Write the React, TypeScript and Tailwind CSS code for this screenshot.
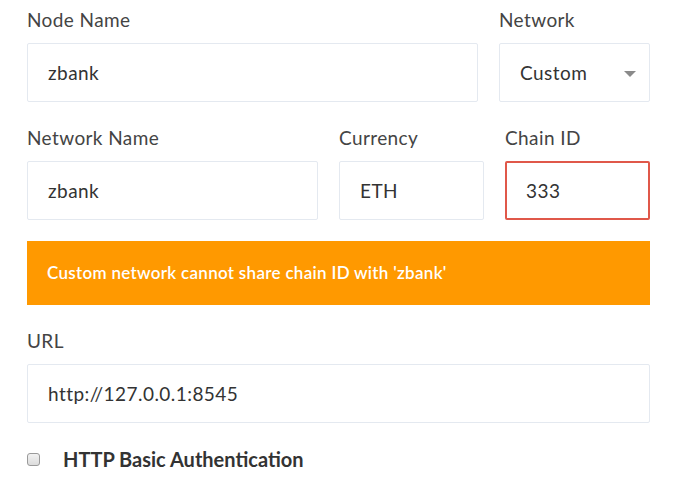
import React from 'react';

const Label = ({ children }: { children: React.ReactNode }) => (
  <label className="block text-[19px] leading-[26px] tracking-[0.4px] text-[#444] mb-[10px]">{children}</label>
);

const Field = ({ value, error }: { value: string; error?: boolean }) => (
  <div
    className={`h-[59px] flex items-center pt-[2px] text-[19px] tracking-[0.45px] text-[#333] bg-white rounded-[2px] ${
      error ? 'border-2 border-[#e0584a] pl-[19px]' : 'border border-[#e4e9f0] pl-[20px]'
    }`}
  >
    {value}
  </div>
);

export default function App() {
  return (
    <div className="min-h-[500px] bg-white pt-[7px] pl-[27px] w-[650px]" style={{ fontFamily: 'Lato, "Open Sans", sans-serif' }}>
      {/* Node name + network */}
      <div className="flex gap-[21px]">
        <div className="flex-1">
          <Label>Node Name</Label>
          <Field value="zbank" />
        </div>
        <div className="w-[151px]">
          <Label>Network</Label>
          <div className="h-[59px] flex items-center justify-between pl-[20px] pr-[13px] pt-[2px] text-[19px] tracking-[0.45px] text-[#333] border border-[#e4e9f0] rounded-[2px]">
            <span>Custom</span>
            <span className="w-0 h-0 border-l-[6px] border-r-[6px] border-t-[6px] border-l-transparent border-r-transparent border-t-[#8a8a8a]" />
          </div>
        </div>
      </div>

      {/* Network / currency / chain */}
      <div className="flex gap-[21px] mt-[23px]">
        <div className="w-[291px]">
          <Label>Network Name</Label>
          <Field value="zbank" />
        </div>
        <div className="w-[145px]">
          <Label>Currency</Label>
          <Field value="ETH" />
        </div>
        <div className="w-[145px]">
          <Label>Chain ID</Label>
          <Field value="333" error />
        </div>
      </div>

      <div className="mt-[21px] h-[64px] bg-[#ff9900] flex items-center pl-[20px] text-white text-[17px] tracking-[0.3px] font-semibold">
        Custom network cannot share chain ID with 'zbank'
      </div>

      <div className="mt-[23px]">
        <Label>URL</Label>
        <Field value="http://127.0.0.1:8545" />
      </div>

      <div className="flex items-center mt-[21px]">
        <input type="checkbox" className="appearance-none w-[13px] h-[13px] m-0 rounded-[3px] border border-[#9a9a9a] bg-gradient-to-b from-[#f2f2f2] to-[#dcdcdc]" />
        <span className="ml-[23px] text-[20px] font-bold text-[#333]">HTTP Basic Authentication</span>
      </div>
    </div>
  );
}
